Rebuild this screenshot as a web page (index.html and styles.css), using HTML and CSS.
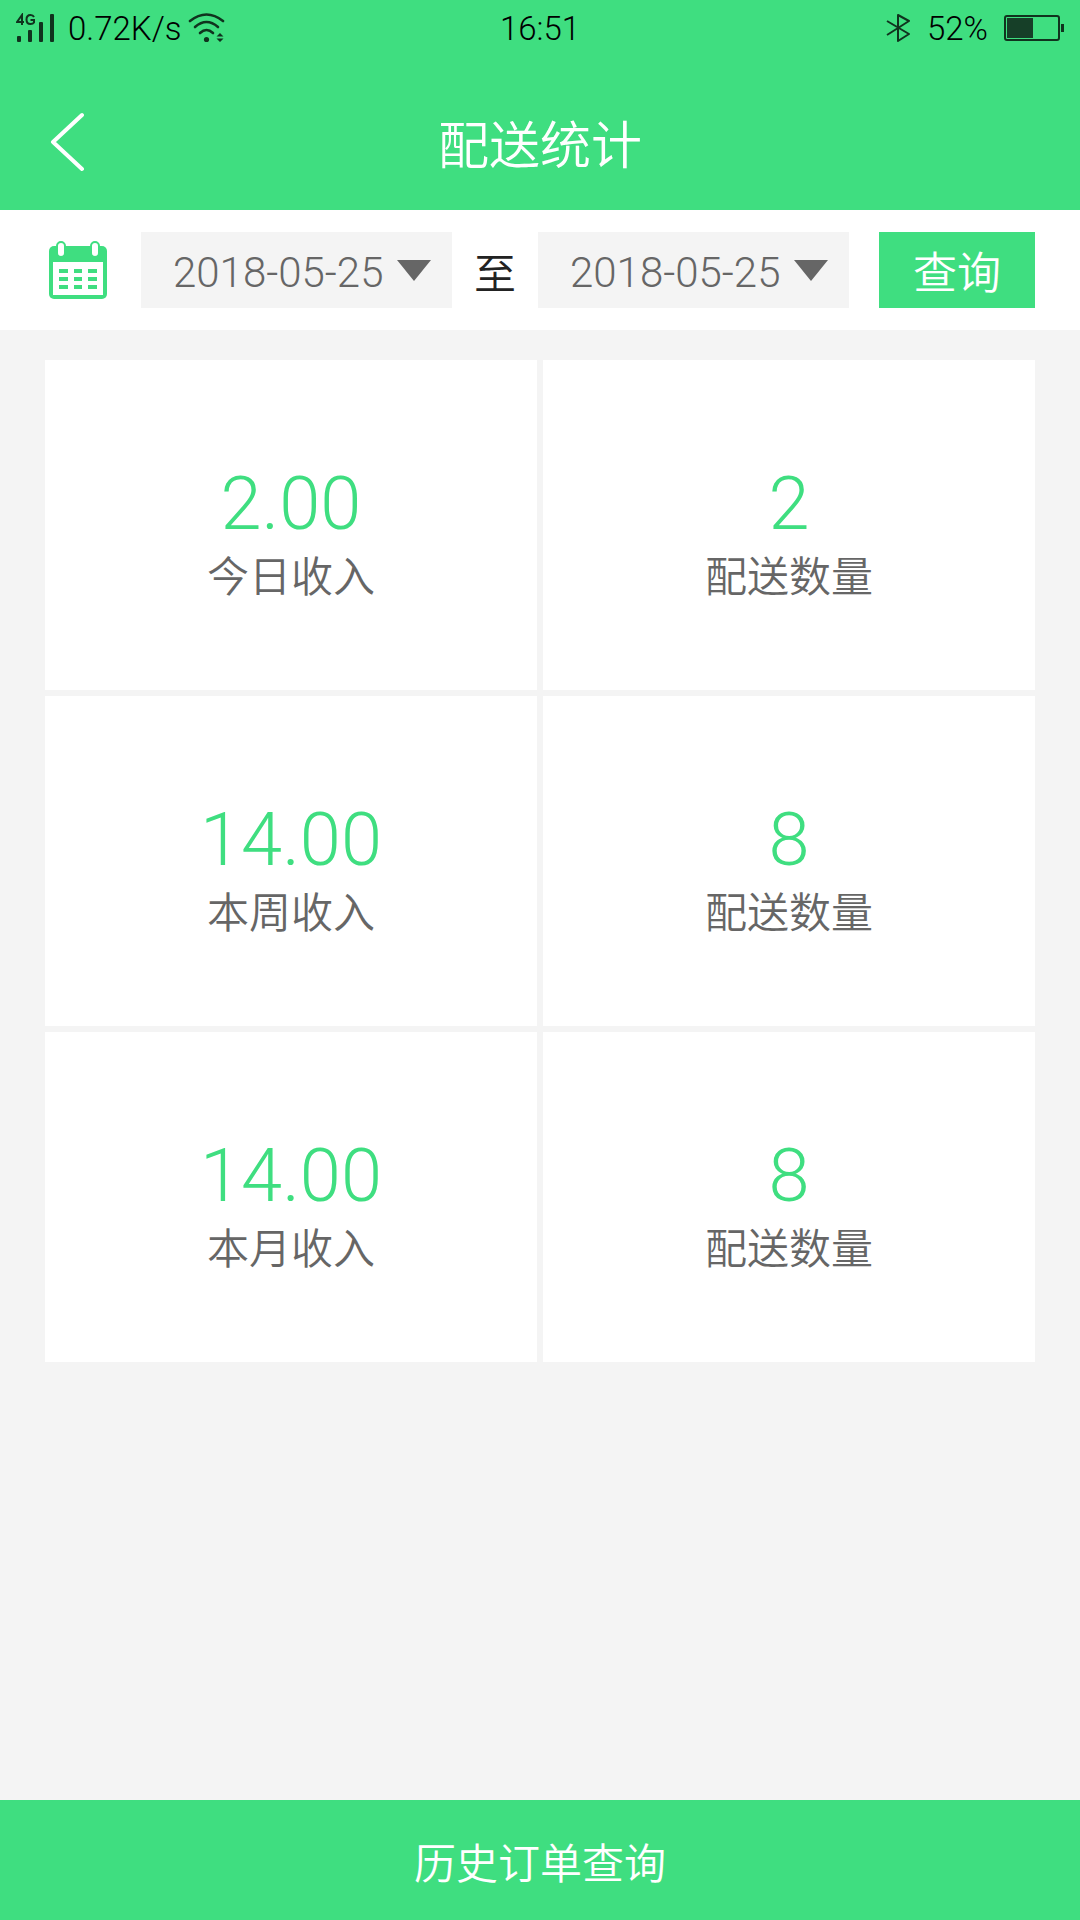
FILE: index.html
```
<!DOCTYPE html>
<html lang="zh-CN">
<head>
    <meta charset="UTF-8">
    <title>配送统计</title>
    <link rel="stylesheet" href="styles.css">
</head>

<body>
    <div class="status-bar">
        <div class="status-left">
            <svg class="signal-icon" width="40" height="30" viewBox="0 0 40 30">
                <g fill="none" stroke="#10331e" stroke-width="2">
                    <path d="M6 12V2L1 9H8" />
                    <path d="M18 4Q17 2 14.500 2Q10.500 2 10.500 6.500Q10.500 11 14.500 11Q17 11 18 9.500V7H14.500" />
                </g>
                <g fill="#10331e">
                    <rect x="1" y="23" width="4" height="6" rx="1" />
                    <rect x="12" y="17" width="4" height="12" rx="1" />
                    <rect x="23" y="9" width="4" height="20" rx="1" />
                    <rect x="34" y="1" width="4" height="28" rx="1" />
                </g>
            </svg>
            <span class="speed">0.72K/s</span>
            <svg class="wifi-icon" width="38" height="30" viewBox="0 0 38 30">
                <g fill="none" stroke="#10331e" stroke-width="2.600" stroke-linecap="round">
                    <path d="M2 8Q18.500-5 35 8" />
                    <path d="M7 14Q18.500 4 30 14" />
                    <path d="M12 20Q18.500 14 25 20" />
                </g>
                <circle cx="18.500" cy="26.500" r="2.600" fill="#10331e" />
                <path d="M28.500 23.500L32 20L35.500 23.500ZM28.500 25.500L32 29L35.500 25.500Z" fill="#10331e" />
            </svg>
        </div>
        <span class="clock">16:51</span>
        <div class="status-right">
            <svg width="26" height="30" viewBox="0 0 26 30">
                <path d="M2 8L24 21L13 28V2L24 8L2 22" fill="none" stroke="#10331e" stroke-width="2" stroke-linejoin="round" />
            </svg>
            <span class="battery-text">52%</span>
            <svg width="60" height="28" viewBox="0 0 60 28">
                <rect x="1" y="2" width="54" height="24" rx="2" fill="none" stroke="#10331e" stroke-width="2" />
                <rect x="3" y="4" width="26" height="20" fill="#163f28" />
                <rect x="57" y="10" width="3" height="8" fill="#10331e" />
            </svg>
        </div>
    </div>

    <header class="header">
        <button class="back-button" type="button" aria-label="返回">
            <svg width="36" height="60" viewBox="0 0 36 60">
                <path d="M34 3L5 30L34 57" fill="none" stroke="#fff" stroke-width="4" stroke-linecap="round" stroke-linejoin="round" />
            </svg>
        </button>
        <h1>配送统计</h1>
    </header>

    <form class="filter">
        <svg class="calendar-icon" width="58" height="58" viewBox="0 0 58 58">
            <rect x="0" y="5" width="58" height="53" rx="5" fill="#3fde80" />
            <rect x="4" y="21" width="50" height="33" fill="#fff" />
            <g fill="#fff" stroke="#3fde80" stroke-width="2">
                <rect x="8" y="1" width="8" height="15" rx="4" />
                <rect x="42" y="1" width="8" height="15" rx="4" />
            </g>
            <path d="M10 30H19M25 30H33M39 30H48M10 38H19M25 38H33M39 38H48M10 46H19M25 46H33M39 46H48" stroke="#3fde80" stroke-width="4" />
        </svg>
        <div class="date-box">
            <select id="startDate" aria-label="开始日期">
                <option>2018-05-25</option>
            </select>
        </div>
        <label class="to" for="endDate">至</label>
        <div class="date-box">
            <select id="endDate">
                <option>2018-05-25</option>
            </select>
        </div>
        <button class="search-button" type="button">查询</button>
    </form>

    <main class="stats">
        <div class="card">
            <span class="number">2.00</span>
            <span class="name">今日收入</span>
        </div>
        <div class="card">
            <span class="number">2</span>
            <span class="name">配送数量</span>
        </div>
        <div class="card">
            <span class="number">14.00</span>
            <span class="name">本周收入</span>
        </div>
        <div class="card">
            <span class="number">8</span>
            <span class="name">配送数量</span>
        </div>
        <div class="card">
            <span class="number">14.00</span>
            <span class="name">本月收入</span>
        </div>
        <div class="card">
            <span class="number">8</span>
            <span class="name">配送数量</span>
        </div>
    </main>

    <button class="history-button" type="button">历史订单查询</button>
</body>

</html>
```
FILE: styles.css
```
* {
    box-sizing: border-box;
}

body {
    margin: 0;
    min-height: 100vh;
    display: flex;
    flex-direction: column;
    background: #f4f4f4;
    font-family: Roboto, "Noto Sans CJK SC", sans-serif;
    font-weight: 360;
}

button,
select {
    border: none;
    border-radius: 0;
    padding: 0;
    font-family: inherit;
    font-weight: inherit;
}

svg {
    display: block;
    flex: none;
}

.status-bar {
    display: grid;
    grid-template-columns: 1fr auto 1fr;
    align-items: center;
    height: 56px;
    padding: 0 16px;
    background: #3fde80;
    color: #000;
    font-size: 33px;
}

.status-left,
.status-right {
    display: flex;
    align-items: center;
}

.status-right {
    justify-content: flex-end;
    gap: 16px;
}

.speed {
    margin: 0 6px 0 12px;
}

.header {
    display: grid;
    grid-template-columns: 60px 1fr 60px;
    align-items: center;
    height: 154px;
    padding: 18px 48px 0;
    background: #3fde80;
    color: #fff;
}

.back-button {
    background: none;
}

.header h1 {
    margin: 0;
    text-align: center;
    font-size: 51px;
    font-weight: inherit;
}

.filter {
    display: flex;
    align-items: center;
    height: 120px;
    padding: 0 45px 0 49px;
    background: #fff;
}

.date-box {
    position: relative;
    flex: 1;
    height: 76px;
    background: #f4f4f4;
}

.calendar-icon {
    margin-right: 34px;
}

.date-box select {
    appearance: none;
    width: 100%;
    height: 100%;
    padding: 4px 0 0 32px;
    background: none;
    color: #666;
    font-size: 42px;
}

/* drop-down arrow */
.date-box::after {
    content: "";
    position: absolute;
    top: 28px;
    right: 21px;
    border: 17px solid transparent;
    border-top: 21px solid #666;
    border-bottom: none;
    pointer-events: none;
}

.to {
    margin: 0 22px;
    color: #222;
    font-size: 42px;
}

.search-button {
    width: 156px;
    height: 76px;
    margin-left: 30px;
    background: #3fde80;
    color: #fff;
    font-size: 44px;
}

.stats {
    display: grid;
    grid-template-columns: 1fr 1fr;
    gap: 6px;
    padding: 30px 45px;
}

.card {
    display: flex;
    flex-direction: column;
    align-items: center;
    height: 330px;
    padding-top: 102px;
    background: #fff;
}

.number {
    color: #3fde80;
    font-size: 74px;
    line-height: 84px;
}

.name {
    color: #666;
    font-size: 42px;
    line-height: 64px;
}

.history-button {
    height: 120px;
    margin-top: auto;
    background: #3fde80;
    color: #fff;
    font-size: 42px;
}
```
